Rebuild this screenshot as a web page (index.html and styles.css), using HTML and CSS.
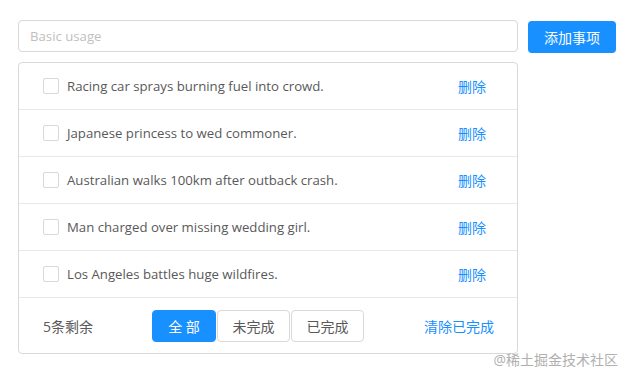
FILE: index.html
```html
<!DOCTYPE html>
<html>
<head>
  <meta charset="utf-8">
  <link rel="stylesheet" href="styles.css">
</head>
<body>
  <div class="todo">
    <div class="add-bar">
      <input class="todo-input" type="text" placeholder="Basic usage">
      <button class="btn-primary">添加事项</button>
    </div>

    <div class="todo-list">
      <div class="todo-item">
        <span class="checkbox"></span>
        <span class="item-text">Racing car sprays burning fuel into crowd.</span>
        <a class="link delete">删除</a>
      </div>
      <div class="todo-item">
        <span class="checkbox"></span>
        <span class="item-text">Japanese princess to wed commoner.</span>
        <a class="link delete">删除</a>
      </div>
      <div class="todo-item">
        <span class="checkbox"></span>
        <span class="item-text">Australian walks 100km after outback crash.</span>
        <a class="link delete">删除</a>
      </div>
      <div class="todo-item">
        <span class="checkbox"></span>
        <span class="item-text">Man charged over missing wedding girl.</span>
        <a class="link delete">删除</a>
      </div>
      <div class="todo-item">
        <span class="checkbox"></span>
        <span class="item-text">Los Angeles battles huge wildfires.</span>
        <a class="link delete">删除</a>
      </div>

      <div class="todo-footer">
        <span class="remain">5条剩余</span>
        <div class="filters">
          <button class="filter active">全 部</button>
          <button class="filter">未完成</button>
          <button class="filter">已完成</button>
        </div>
        <a class="link clear">清除已完成</a>
      </div>
    </div>
  </div>

  <div class="watermark">@稀土掘金技术社区</div>
</body>
</html>
```

FILE: styles.css
```css
body {
  margin: 0;
  font-family: "Open Sans", "Noto Sans CJK SC", sans-serif;
  font-size: 14px;
  color: #595959;
  background: #fff;
}

.todo {
  padding: 20px 18px;
  width: 598px;
}

.add-bar {
  display: flex;
  align-items: flex-start;
  gap: 10px;
  height: 32px;
}

.todo-input {
  box-sizing: border-box;
  width: 500px;
  height: 32px;
  padding: 4px 11px;
  border: 1px solid #d9d9d9;
  border-radius: 4px;
  font-family: inherit;
  font-size: 13.2px;
  color: #595959;
  outline: none;
}

.todo-input::placeholder {
  color: #bfbfbf;
}

.btn-primary {
  width: 88px;
  height: 32px;
  margin-top: 1px;
  border: none;
  border-radius: 4px;
  background: #1890ff;
  color: #fff;
  font-family: inherit;
  font-size: 14px;
}

.todo-list {
  box-sizing: border-box;
  width: 500px;
  margin-top: 10px;
  border: 1px solid #d9d9d9;
  border-radius: 4px;
}

.todo-item {
  display: flex;
  align-items: center;
  height: 46px;
  padding: 0 31px 0 24px;
  border-bottom: 1px solid #e8e8e8;
}

.checkbox {
  box-sizing: border-box;
  width: 16px;
  height: 16px;
  border: 1px solid #d9d9d9;
  border-radius: 2px;
  margin-right: 8px;
}

.item-text {
  flex: 1;
  font-size: 13.2px;
}

.link {
  color: #1890ff;
  cursor: pointer;
}

.todo-footer {
  display: flex;
  align-items: center;
  height: 55px;
  padding: 0 23px 0 24px;
}

.remain {
  width: 109px;
}

.filters {
  display: flex;
  gap: 1px;
  margin-top: 1px;
}

.filter {
  width: 73px;
  height: 32px;
  border: 1px solid #d9d9d9;
  border-radius: 4px;
  background: #fff;
  color: #595959;
  font-family: inherit;
  font-size: 14px;
}

.filter.active {
  width: 64px;
  border-color: #1890ff;
  background: #1890ff;
  color: #fff;
}

.clear {
  margin-left: auto;
}

.watermark {
  position: absolute;
  right: 13px;
  bottom: 11px;
  font-size: 14px;
  color: #b0b0b0;
}
```
